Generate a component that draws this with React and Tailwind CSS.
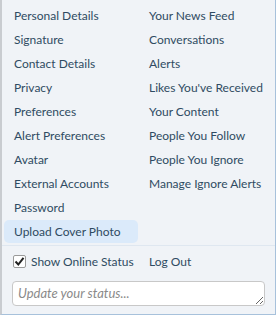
export default function App() {
  const left = ['Personal Details', 'Signature', 'Contact Details', 'Privacy', 'Preferences', 'Alert Preferences', 'Avatar', 'External Accounts', 'Password']
  const right = ['Your News Feed', 'Conversations', 'Alerts', "Likes You've Received", 'Your Content', 'People You Follow', 'People You Ignore', 'Manage Ignore Alerts']
  return (
    <div className="w-[277px] h-[317px] bg-white" style={{ fontFamily: '"Trebuchet MS", Lato, sans-serif' }}>
      <div className="w-[276px] h-[315px] flex flex-col bg-[#f0f3f7] border-l-2 border-l-[#c9ccd0] border-r border-r-[#a7c1db] border-b border-b-[#a7c1db] text-[12px] text-[#2f4b62]">
        <div className="flex pt-[4px] h-[245px]">
          <ul className="w-[138px] pl-[2px]">
            {left.map(t => (
              <li key={t} className="h-[24px] flex items-center px-[10px]">{t}</li>
            ))}
            <li className="h-[23px] flex items-center px-[10px] rounded-[5px] bg-[#dbeafa] w-[134px]">Upload Cover Photo</li>
          </ul>
          <ul className="flex-1 pl-[9px]">
            {right.map(t => (
              <li key={t} className="h-[24px] flex items-center">{t}</li>
            ))}
          </ul>
        </div>
        <div className="border-t border-t-[#dfe7f0] flex items-center h-[30px] pt-[2px]">
          <label className="w-[140px] flex items-center pl-[11px] gap-[5px]">
            <span className="w-[13px] h-[13px] bg-white border border-[#9a9a9a] rounded-[2px] flex items-center justify-center">
              <svg width="11" height="11" viewBox="0 0 11 11"><path d="M1.5 5.5 L4.3 8.5 L9.5 1.8" fill="none" stroke="#222" strokeWidth="2" /></svg>
            </span>
            <span>Show Online Status</span>
          </label>
          <span className="pl-[7px]">Log Out</span>
        </div>
        <div className="px-[10px] pt-[6px]">
          <textarea rows={1} placeholder="Update your status..." className="w-[253px] h-[25px] bg-white border border-[#c8c8c8] rounded-[4px] px-[5px] py-[3px] text-[13px] italic placeholder-[#8a8a8a] resize-y outline-none leading-[16px]" />
        </div>
      </div>
    </div>
  )
}
